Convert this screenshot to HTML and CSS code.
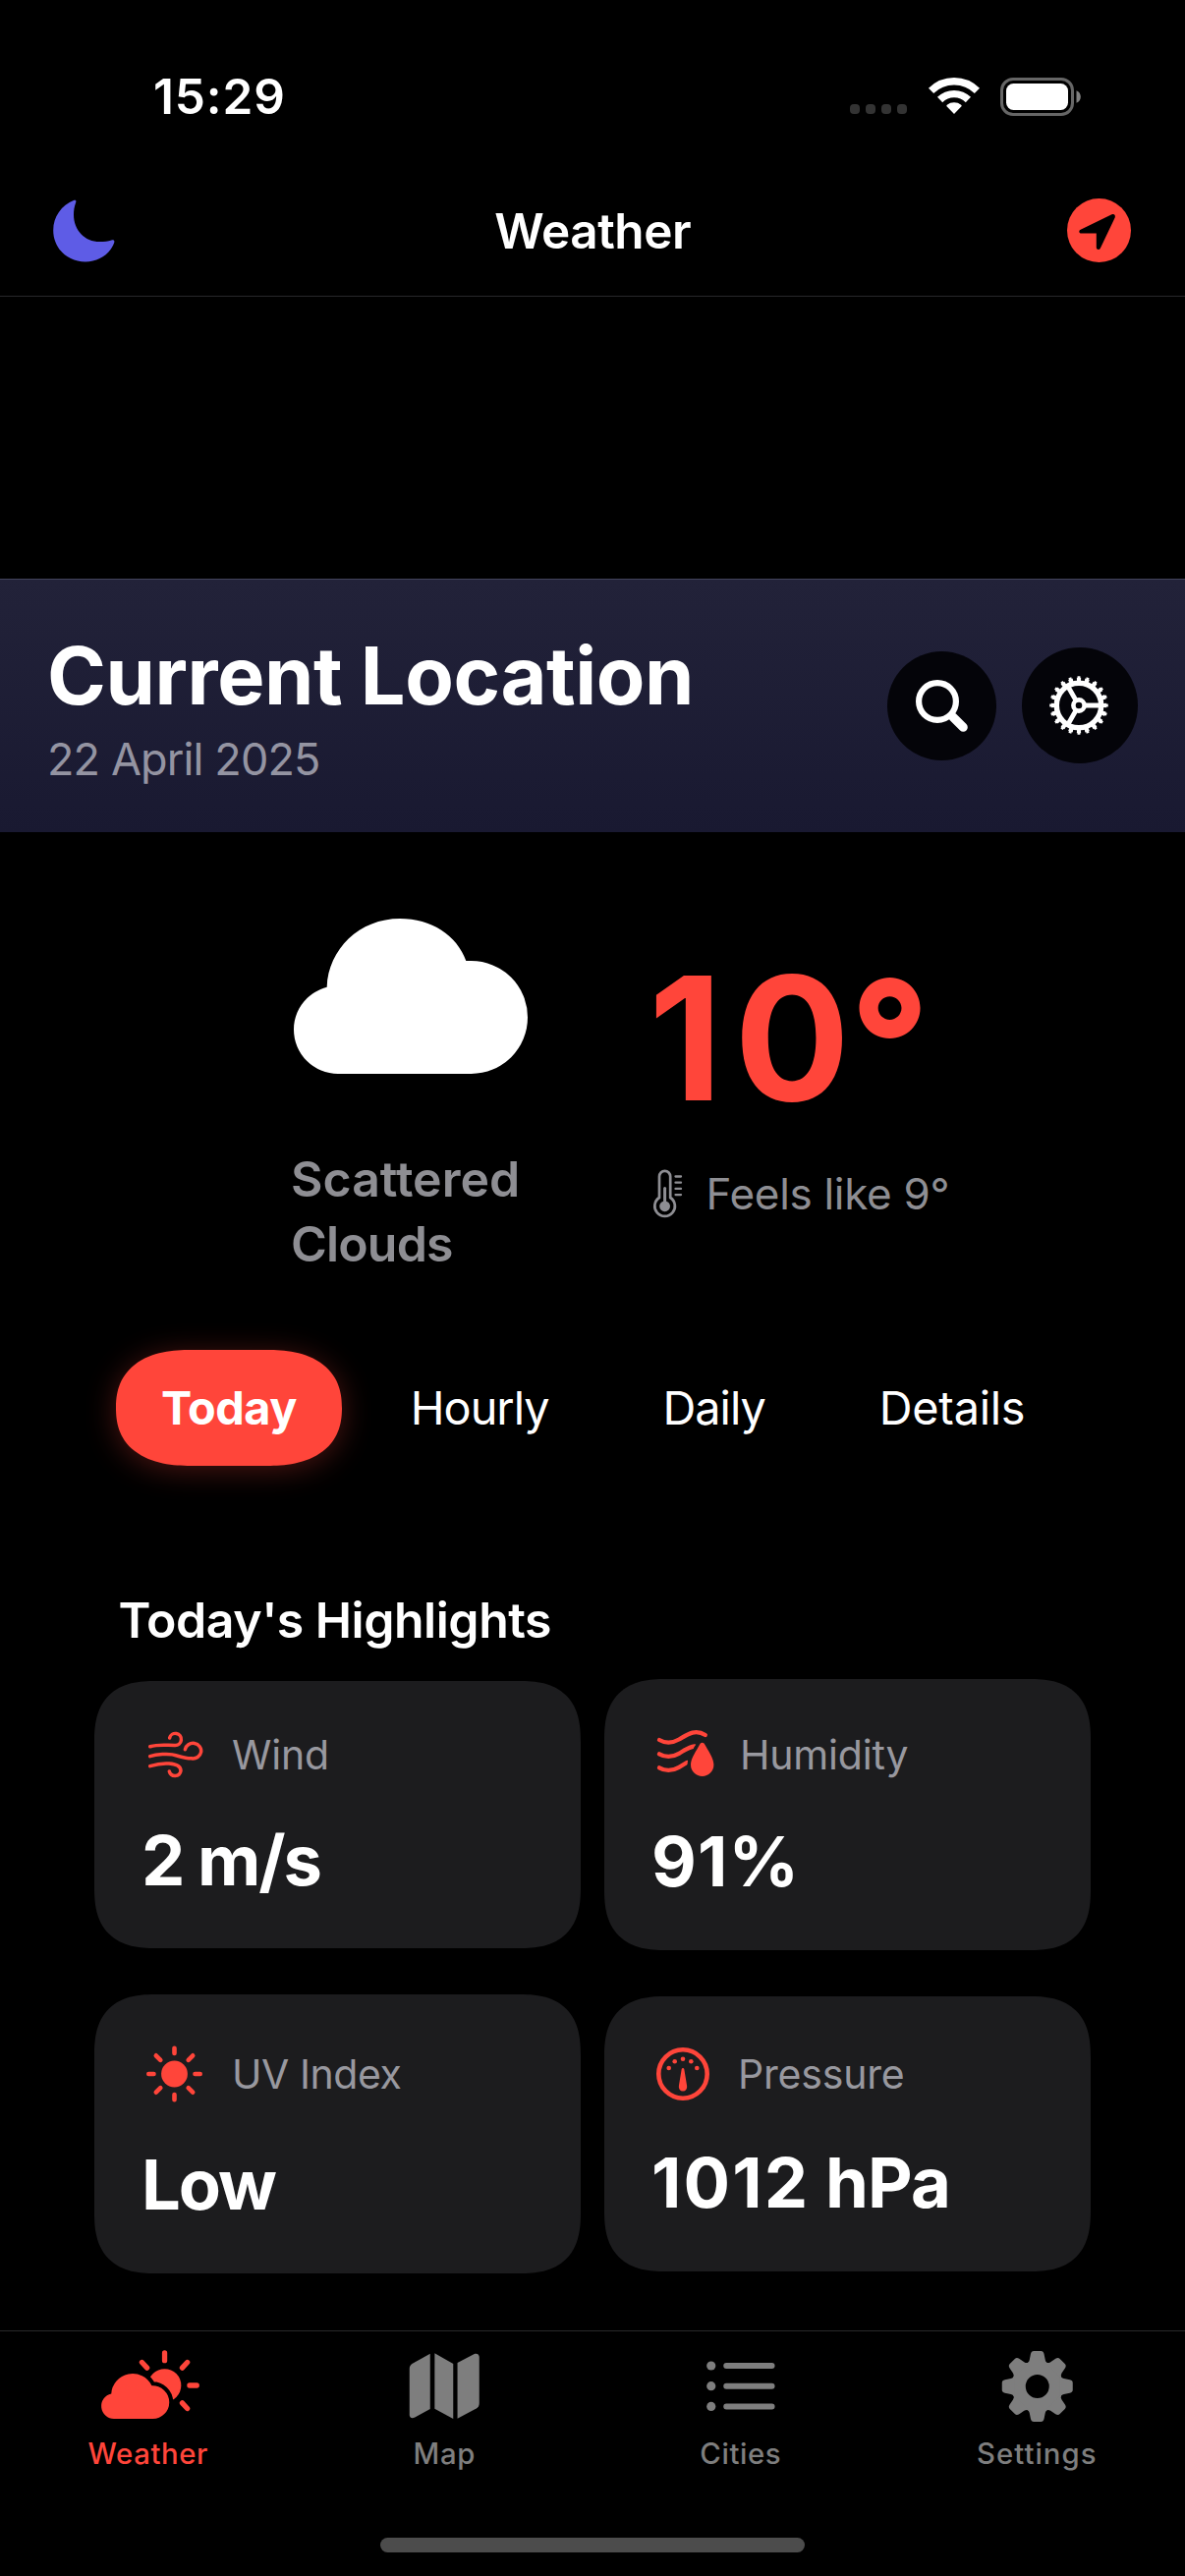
FILE: index.html
```html
<!DOCTYPE html>
<html lang="en">
<head>
<meta charset="utf-8">
<title>Weather</title>
<link rel="stylesheet" href="styles.css">
</head>
<body>
<div class="screen">
  <header class="status-bar">
    <span class="clock">15:29</span>
    <div class="status-icons">
      <span class="signal"><i></i><i></i><i></i><i></i></span>
      <svg class="wifi" width="52" height="38" viewBox="-26 -37 52 38">
        <path d="M-23.4 -23.6A33.2 33.2 0 0 1 23.4 -23.6M-14.4 -14.5A20.5 20.5 0 0 1 14.4 -14.5" fill="none" stroke="#fff" stroke-width="7.4"/>
        <path d="M0 0L-7.5 -7.7Q-8 -8.6 -7.2 -9.2A11.7 11.7 0 0 1 7.2 -9.2Q8 -8.6 7.5 -7.7Z" fill="#fff"/>
      </svg>
      <svg class="battery" width="82" height="39" viewBox="0 0 82 39">
        <rect x="1.5" y="1.5" width="72" height="36" rx="11.5" fill="none" stroke="#666" stroke-width="3"/>
        <rect x="6" y="6" width="63" height="27" rx="7.5" fill="#fff"/>
        <path d="M77.5 13.2C83.3 15.5 83.3 23.5 77.5 25.8Z" fill="#808080"/>
      </svg>
    </div>
  </header>

  <nav class="nav-bar">
    <svg class="moon" width="63" height="64" viewBox="53.6 203.6 63 64">
      <path d="M75 204.4C76.8 203.8 77.3 205 76.8 206.6C75.2 211 74.6 215 74.6 219C74.6 235 86 246.6 101 246.6C106 246.6 109.5 246 113 245C115.5 244.4 116.5 245.5 115.8 247.6C111.5 259.5 100 267 86.5 267C68 267 53.8 253 53.8 235C53.8 221.5 62 209.5 75 204.4Z" fill="#5e5ce6"/>
    </svg>
    <h1 class="nav-title">Weather</h1>
    <svg class="locate" width="65" height="65" viewBox="0 0 65 65">
      <circle cx="32.5" cy="32.5" r="32.5" fill="#ff453a"/>
      <path d="M45.5 16.3C47.7 15.3 49.6 17 48.7 19.4L33.8 50.7C32.8 52.9 29.8 52.3 29.8 49.8V35.6H14.7C12.1 35.6 11.4 32.8 13.7 31.7Z" fill="#000"/>
    </svg>
  </nav>

  <main>
    <section class="place">
      <div class="place-text">
        <h2>Current Location</h2>
        <p>22 April 2025</p>
      </div>
      <div class="place-actions">
        <button class="round search" aria-label="Search">
          <svg width="53" height="53" viewBox="0 0 53 53" fill="none" stroke="#fff">
            <circle cx="22" cy="22" r="18.9" stroke-width="6.2"/>
            <path d="M35 35L36.5 36.5" stroke-width="8"/>
            <path d="M38 38L48.3 48.3" stroke-width="9" stroke-linecap="round"/>
          </svg>
        </button>
        <button class="round gear" aria-label="Settings">
          <svg width="60" height="60" viewBox="-29 -30 60 60" fill="none" stroke="#fff">
            <circle r="22.7" stroke-width="5.4"/>
            <circle r="26.5" stroke-width="3.6" pathLength="200" stroke-dasharray="5.2 4.8" stroke-dashoffset="2.6"/>
            <circle r="28.6" stroke-width="2.4" pathLength="200" stroke-dasharray="3.2 6.8" stroke-dashoffset="1.6"/>
            <circle r="5.6" stroke-width="4.6"/>
            <path d="M7 0H21M-3.5 -6.06L-10.5 -18.19M-3.5 6.06L-10.5 18.19" stroke-width="4.8"/>
          </svg>
        </button>
      </div>
    </section>

    <section class="now">
      <div class="now-sky">
        <svg width="238" height="158" viewBox="299 935 238 158">
          <path d="M344 1093A45 45 0 0 1 299 1048C299 1028 312 1010.500 332.700 1004.700C334 966 366 935 407 935C439 935 465 952 474.300 978H479.500A57.500 57.500 0 0 1 479.500 1093Z" fill="#fff"/>
        </svg>
        <p>Scattered <span>Clouds</span></p>
      </div>
      <div class="now-temp">
        <p class="degrees">10<span>°</span></p>
        <p class="feels">
          <svg width="30" height="50" viewBox="665 1190.5 30 50" fill="none" stroke="#8e8e93">
            <path d="M671 1219.5V1198A5.6 5.6 0 0 1 682.2 1198V1219.5A10.3 10.3 0 1 1 671 1219.5Z" stroke-width="2.7"/>
            <circle cx="676.6" cy="1228.3" r="5.4" fill="#8e8e93" stroke="none"/>
            <path d="M676.6 1228V1210" stroke-width="3" stroke-linecap="round"/>
            <path d="M687.5 1198H693M687.5 1204.2H693M687.5 1210.4H693M687.5 1216.6H693" stroke-width="2.3" stroke-linecap="round"/>
          </svg>
          Feels like 9°
        </p>
      </div>
    </section>

    <div class="tabs">
      <button class="tab active">Today</button>
      <button class="tab">Hourly</button>
      <button class="tab">Daily</button>
      <button class="tab last">Details</button>
    </div>

    <section class="highlights">
      <h3>Today's Highlights</h3>
      <div class="cards">
        <article class="card wind">
          <header>
            <svg width="68" height="54" viewBox="144 1759 68 54" fill="none" stroke="#ff453a" stroke-width="3.5" stroke-linecap="round">
              <path d="M152.7 1777.7C162 1775 170 1776.5 178 1776.4A6 6 0 1 0 172.6 1769"/>
              <path d="M152.7 1787.7C158 1786 172 1784 180 1787C187 1789 190 1790 195 1789.8A8.2 7.8 0 1 0 188.4 1780.8"/>
              <path d="M152.7 1797.7C161 1795 168 1794.7 172 1795C179 1795.5 184 1798 184 1802.5A6 6 0 0 1 172.3 1803"/>
            </svg>
            <span>Wind</span>
          </header>
          <strong>2 m/s</strong>
        </article>
        <article class="card humidity">
          <header>
            <svg width="66" height="58" viewBox="663 1757 66 58">
              <g fill="none" stroke="#ff453a" stroke-width="4.3" stroke-linecap="round">
                <path d="M671 1771C677 1774.5 684 1774.5 691 1770.5C698 1766.5 707 1759 717.8 1766"/>
                <path d="M671 1785.3C677 1788.8 684 1788.8 691 1784.8C696 1782 700 1778.5 707 1777.5"/>
                <path d="M671 1799.3C677 1802.8 684 1802.8 691 1798.8L699 1794"/>
              </g>
              <path class="drop" d="M714.7 1773.8C713.5 1773.8 712.8 1774.5 712.2 1775.6C708 1783 703 1790 703 1796.3A11.7 11.6 0 0 0 726.4 1796.3C726.4 1790 721.5 1783 717.2 1775.6C716.6 1774.5 715.9 1773.8 714.7 1773.8Z"/>
            </svg>
            <span>Humidity</span>
          </header>
          <strong>91%</strong>
        </article>
        <article class="card uv">
          <header>
            <svg width="68" height="66" viewBox="-33.5 -33 68 66" stroke="#ff453a" stroke-width="4.6" stroke-linecap="round">
              <circle r="13.4" fill="#ff453a" stroke="none"/>
              <path d="M0 -21V-26.2M0 21V26.2M-21 0H-26.2M21 0H26.2M14.2 -14.2L18.7 -18.7M-14.2 -14.2L-18.7 -18.7M14.2 14.2L18.7 18.7M-14.2 14.2L-18.7 18.7"/>
            </svg>
            <span>UV Index</span>
          </header>
          <strong>Low</strong>
        </article>
        <article class="card pressure">
          <header>
            <svg width="64" height="62" viewBox="663 2080 64 62" fill="#ff453a">
              <circle cx="695" cy="2111" r="24.7" fill="none" stroke="#ff453a" stroke-width="4.6"/>
              <circle cx="695" cy="2095.7" r="2.3"/>
              <circle cx="686.7" cy="2098.3" r="2.3"/>
              <circle cx="703.3" cy="2098.3" r="2.3"/>
              <circle cx="680.7" cy="2105" r="2.3"/>
              <circle cx="709.3" cy="2105" r="2.3"/>
              <path d="M693.7 2106L690.9 2123A4.2 4.6 0 1 0 699.1 2123L696.3 2106A1.35 1.35 0 0 0 693.7 2106Z"/>
            </svg>
            <span>Pressure</span>
          </header>
          <strong>1012 <span class="unit">hPa</span></strong>
        </article>
      </div>
    </section>
  </main>

  <footer class="tab-bar">
    <div class="tab-items">
      <a class="item selected">
        <svg width="104" height="80" viewBox="98.75 2389 104 80">
          <circle cx="167.3" cy="2428" r="16.8" fill="currentColor"/>
          <path d="M167.3 2402.7V2395M192.7 2428H200M185.2 2410.1L190.4 2404.5M149.4 2410.1L144.2 2404.5M185.2 2445.9L190.4 2451.5" stroke="currentColor" stroke-width="5.3" stroke-linecap="round"/>
          <path class="cut" d="M116 2462A12.9 12.9 0 0 1 113 2436.5A21.7 21.7 0 0 1 154.2 2428.3A16.9 16.9 0 0 1 172 2445.2A16.9 16.9 0 0 1 155.2 2462Z"/>
        </svg>
        <span>Weather</span>
      </a>
      <a class="item">
        <svg width="104" height="80" viewBox="400.25 2389 104 80" fill="currentColor">
          <path d="M438 2395.7V2452L422.5 2460.6C419 2462.3 417 2460.5 417 2458V2411Q417 2407.5 420 2405.8Z"/>
          <path d="M442.6 2395.3L461.5 2406V2462L442.6 2451.7Z"/>
          <path d="M465.8 2405L482.5 2396.3C486 2394.8 488 2396.8 488 2399.5V2446Q488 2449.7 485 2451.5L465.8 2461.7Z"/>
        </svg>
        <span>Map</span>
      </a>
      <a class="item">
        <svg width="104" height="80" viewBox="701.75 2389 104 80" fill="currentColor">
          <circle cx="723.5" cy="2408" r="4.6"/><circle cx="723.5" cy="2428.7" r="4.6"/><circle cx="723.5" cy="2449.4" r="4.6"/>
          <path d="M739 2408H785.3M739 2428.7H785.3M739 2449.4H785.3" stroke="currentColor" stroke-width="6" stroke-linecap="round"/>
        </svg>
        <span>Cities</span>
      </a>
      <a class="item wide">
        <svg width="104" height="80" viewBox="-52.75 -40 104 80" fill="currentColor">
          <defs><path id="tooth" d="M-12 -23Q-8.6 -24 -8 -27L-6.8 -33Q-6.2 -36 -3.6 -36H3.6Q6.2 -36 6.8 -33L8 -27Q8.6 -24 12 -23Z"/></defs>
          <circle r="19" fill="none" stroke="currentColor" stroke-width="14"/>
          <use href="#tooth"/><use href="#tooth" transform="rotate(45)"/><use href="#tooth" transform="rotate(90)"/><use href="#tooth" transform="rotate(135)"/>
          <use href="#tooth" transform="rotate(180)"/><use href="#tooth" transform="rotate(225)"/><use href="#tooth" transform="rotate(270)"/><use href="#tooth" transform="rotate(315)"/>
        </svg>
        <span>Settings</span>
      </a>
    </div>
    <div class="home-indicator"></div>
  </footer>
</div>
</body>
</html>
```
FILE: styles.css
```css
* {
  box-sizing: border-box;
  margin: 0;
  padding: 0;
}

body {
  background: #000;
  color: #fff;
  font-family: Inter, "Liberation Sans", sans-serif;
}

button {
  border: 0;
  background: none;
  color: inherit;
  font: inherit;
}

svg {
  display: block;
  flex: none;
  overflow: visible;
}

.screen {
  display: flex;
  flex-direction: column;
  width: 1206px;
  height: 2622px;
  overflow: hidden;
}

/* status bar */
.status-bar {
  display: flex;
  justify-content: space-between;
  align-items: center;
  height: 168px;
  padding: 28px 106px 0 156px;
}

.clock {
  font-size: 49.5px;
  font-weight: 600;
  letter-spacing: 0.9px;
}

.status-icons {
  display: flex;
  align-items: center;
}

.signal {
  display: flex;
  gap: 6px;
  margin-top: 26px;
}

.signal i {
  width: 10px;
  height: 10px;
  border-radius: 4px;
  background: #333;
}

.wifi {
  margin-left: 21.5px;
}

.battery {
  margin-left: 21.5px;
}

/* navigation bar */
.nav-bar {
  display: grid;
  grid-template-columns: 1fr auto 1fr;
  align-items: center;
  height: 134px;
  padding: 0 55px 0 53.5px;
  border-bottom: 1px solid #28282a;
}

.nav-title {
  padding-left: 2px;
  font-size: 49.5px;
  font-weight: 600;
  letter-spacing: -0.45px;
}

.locate {
  justify-self: end;
}

main {
  flex: 1;
}

/* location banner */
.place {
  display: flex;
  justify-content: space-between;
  align-items: center;
  height: 258px;
  margin-top: 287px;
  padding: 0 48px;
  border-top: 1px solid #42445a;
  background: linear-gradient(#222239, #191931);
}

.place-text {
  display: flex;
  flex-direction: column;
  gap: 8px;
}

.place h2 {
  font-size: 81px;
  font-weight: 700;
  line-height: 100px;
  letter-spacing: -0.45px;
}

.place p {
  font-size: 45px;
  line-height: 54px;
  letter-spacing: -0.88px;
  color: #9494a2;
}

.place-actions {
  display: flex;
  align-items: center;
  gap: 26px;
  padding-bottom: 1px;
}

.round {
  display: grid;
  place-items: center;
  border-radius: 50%;
  background: #040409;
}

.search {
  width: 111px;
  height: 111px;
}

.gear {
  width: 118px;
  height: 118px;
}

/* current conditions */
.now {
  display: grid;
  grid-template-columns: 364px auto;
  align-items: start;
  padding: 88px 0 0 296px;
}

.now-sky {
  display: grid;
  gap: 74px;
}

.now-sky svg {
  margin-left: 3px;
}

.now-sky p {
  width: 240px;
  font-size: 50px;
  font-weight: 600;
  line-height: 66px;
  letter-spacing: 0;
  color: #8e8e93;
}

.now-sky span {
  letter-spacing: -0.84px;
}

.now-temp {
  display: grid;
  gap: 41px;
  padding-top: 31.5px;
}

.degrees {
  font-size: 174.6px;
  font-weight: 700;
  line-height: 180px;
  letter-spacing: 11.9px;
  color: #ff453a;
}

.degrees span {
  position: relative;
  top: 3px;
  margin-left: -11.5px;
  font-weight: 800;
}

.feels {
  display: flex;
  align-items: center;
  gap: 23.5px;
  padding-left: 5px;
  font-size: 44px;
  line-height: 54px;
  letter-spacing: -0.3px;
  color: #8e8e93;
}

/* segment tabs */
.tabs {
  display: flex;
  gap: 24px;
  padding: 75px 0 0 118px;
}

.tab {
  height: 118px;
  padding: 0 46px;
  border-radius: 76px / 59px;
  corner-shape: superellipse(1.25);
  font-size: 46.8px;
  letter-spacing: -1px;
}

.tab.active {
  background: #ff453a;
  box-shadow: 0 4px 30px rgba(255, 69, 58, 0.3);
  font-weight: 700;
  letter-spacing: -0.5px;
}

.tab.last {
  letter-spacing: -0.25px;
}

/* highlight cards */
.highlights {
  padding: 126px 96px 0;
}

.highlights h3 {
  padding-left: 24.5px;
  font-size: 50px;
  font-weight: 600;
  line-height: 62px;
  letter-spacing: -0.48px;
}

.cards {
  display: grid;
  grid-template-columns: 495px 495px;
  gap: 45px 24px;
  align-items: center;
  margin-top: 29px;
}

.card {
  padding: 48px;
  border-radius: 62px;
  corner-shape: superellipse(1.35);
  background: #1c1c1e;
}

.card header {
  display: flex;
  align-items: center;
  gap: 24px;
  margin-bottom: 38px;
  font-size: 41px;
  letter-spacing: -0.2px;
  color: #98989f;
}

.card strong {
  display: block;
  font-size: 70.5px;
  font-weight: 700;
  line-height: 84px;
}

.wind strong,
.uv strong {
  letter-spacing: -2.1px;
}

.card.wind {
  padding-bottom: 47px;
}

.wind header {
  margin-bottom: 39px;
}

.humidity strong {
  letter-spacing: 1.15px;
}

.pressure strong {
  letter-spacing: 2.1px;
  word-spacing: -3px;
}

.pressure .unit {
  letter-spacing: -0.8px;
}

.uv header {
  letter-spacing: -0.45px;
}

.drop {
  fill: #ff453a;
  stroke: #1c1c1e;
  stroke-width: 7px;
  paint-order: stroke;
}

/* bottom tab bar */
.tab-bar {
  display: flex;
  flex-direction: column;
  align-items: center;
  height: 250px;
  padding-bottom: 24px;
  border-top: 1px solid #28282a;
}

.tab-items {
  display: grid;
  grid-template-columns: repeat(4, 1fr);
  width: 100%;
  padding-top: 16px;
}

.item {
  display: flex;
  flex-direction: column;
  align-items: center;
  gap: 10px;
  color: #7e7e7e;
  font-size: 29.3px;
  font-weight: 500;
  line-height: 37px;
  letter-spacing: 0.6px;
}

.wide {
  letter-spacing: 1.05px;
}

.selected {
  color: #ff453a;
}

.cut {
  fill: currentColor;
  stroke: #000;
  stroke-width: 8px;
  paint-order: stroke;
}

.home-indicator {
  width: 432px;
  height: 15px;
  margin-top: auto;
  border-radius: 7.5px;
  background: #4c4c4c;
}
```
